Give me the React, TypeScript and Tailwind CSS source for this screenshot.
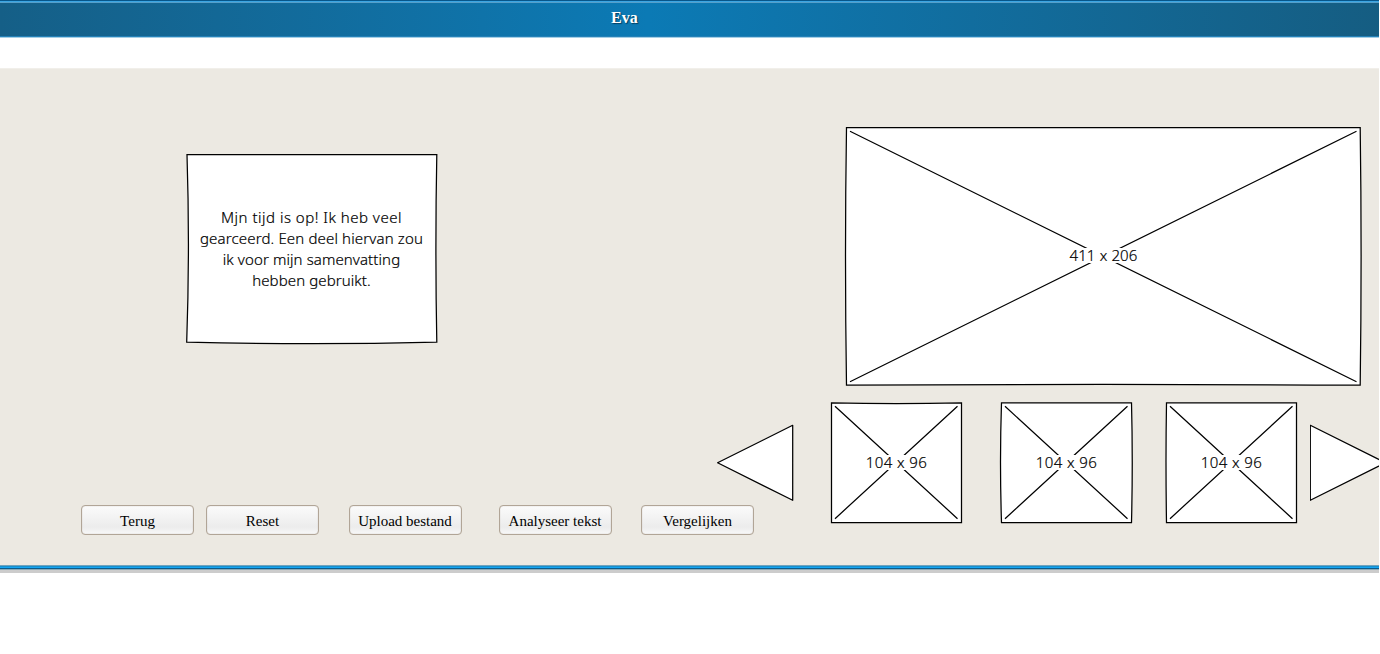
import type { ReactNode } from "react";

type ImageBoxProps = {
  width: number;
  height: number;
  outline: string;
  label: string;
  labelClass: string;
};

function ImageBox({ width, height, outline, label, labelClass }: ImageBoxProps) {
  return (
    <div className="relative grid shrink-0 place-items-center">
      <svg width={width} height={height} className="col-start-1 row-start-1 block overflow-visible" fill="none" stroke="#000" strokeWidth="1.25">
        <path d={outline} fill="#fff" />
        <path d={`M4 4.3 L${width - 4.5} ${height - 4.3} M${width - 4.5} 4.3 L4 ${height - 4.3}`} />
      </svg>
      <span className={`z-10 col-start-1 row-start-1 whitespace-nowrap bg-white font-['Noto_Sans',sans-serif] text-[15px] font-light leading-[15px] text-black [-webkit-text-stroke:0.2px_#000] ${labelClass}`}>
        {label}
      </span>
    </div>
  );
}

function Button({ children }: { children: ReactNode }) {
  return (
    <button className="h-[30px] w-[113px] shrink-0 whitespace-nowrap rounded-[4px] border border-[#b1a597] bg-linear-to-b from-[#fbfbfb] via-[#ececec] via-75% to-[#f8f8f8] pt-px text-[15px] leading-[28px] text-black shadow-[inset_0_0_1px_#b1a597]">
      {children}
    </button>
  );
}

function MessageCard() {
  return (
    <div className="grid h-[190px] w-[251px]">
      <svg width="251" height="190" className="col-start-1 row-start-1 overflow-visible" fill="#fff" stroke="#000" strokeWidth="1.25">
        <path d="M1 .5 H250.8 Q249 94 250.8 188.2 Q126 191.2 .7 188.2 Q4 94 1 .5 Z" />
      </svg>
      <p className="col-start-1 row-start-1 flex flex-col items-center pt-[53px] font-['Noto_Sans',sans-serif] text-[15px] font-light leading-[21px] text-black [-webkit-text-stroke:0.2px_#000]">
        <span className="whitespace-nowrap tracking-[0.5px]">Mjn tijd is op! Ik heb veel</span>
        <span className="whitespace-nowrap tracking-[0.15px]">gearceerd. Een deel hiervan zou</span>
        <span className="whitespace-nowrap tracking-[0.1px]">ik voor mijn samenvatting</span>
        <span className="whitespace-nowrap tracking-[0.1px]">hebben gebruikt.</span>
      </p>
    </div>
  );
}

export default function App() {
  return (
    <div className="h-[654px] w-[1379px] overflow-hidden bg-white font-['Liberation_Serif',serif]">
      <header className="flex h-[38px] flex-col">
        <div className="h-px bg-[#07568a]" />
        <div className="h-px bg-[#3ba5e2]" />
        <div className="h-px bg-[#559fca]" />
        <div className="flex h-[33px] bg-linear-to-r from-[#155f87] via-[#0b7ab5] via-47% to-[#155d82] pl-[611px]">
          <h1 className="text-[16px] font-bold leading-[30px] text-white [text-shadow:1px_1px_1px_#044062]">Eva</h1>
        </div>
        <div className="h-px bg-[#2481b8]" />
        <div className="h-px bg-[#a5cfe5]" />
      </header>
      <main className="mt-[30px] flex h-[497px] border-t border-[#f1efea] bg-[#ece9e2]">
        <section className="flex w-[754px] shrink-0 flex-col pt-[85px]">
          <div className="ml-[186px]"><MessageCard /></div>
          <div className="ml-[81px] mt-[161px] flex">
            <Button>Terug</Button>
            <div className="ml-[12px]"><Button>Reset</Button></div>
            <div className="ml-[29.5px]"><Button>Upload bestand</Button></div>
            <div className="ml-[37px]"><Button>Analyseer tekst</Button></div>
            <div className="ml-[29.5px]"><Button>Vergelijken</Button></div>
          </div>
        </section>
        <section className="-ml-[37px] flex shrink-0 flex-col pt-[58px]">
          <div className="ml-[129px] flex">
            <ImageBox width={515} height={259} outline="M.5 .5 H514.2 Q516 129 514.2 258.2 Q257 256.7 .5 258.2 Q-1.5 129 .5 .5Z" label="411 x 206" labelClass="mb-[2px] tracking-[0.15px]" />
          </div>
          <div className="mt-[16px] flex items-center">
            <svg width="77" height="77" className="shrink-0" fill="#fff" stroke="#000" strokeWidth="1.25" strokeLinejoin="round">
              <path d="M.6 38.7 L75.7 1.3 V76.3 Z" />
            </svg>
            <div className="ml-[37px]">
              <ImageBox width={131} height={121} outline="M.5 .8 Q65 2.3 130.5 .8 V120.5 H.5Z" label="104 x 96" labelClass="tracking-[0.4px]" />
            </div>
            <div className="ml-[39px]">
              <ImageBox width={131} height={121} outline="M.5 .8 H130.5 Q132 60 130.5 120.5 H.5 Q-1.5 60 .5 .8Z" label="104 x 96" labelClass="tracking-[0.4px]" />
            </div>
            <div className="ml-[34px]">
              <ImageBox width={131} height={121} outline="M.5 .8 H130.5 V120.5 H.5 Q-.5 60 .5 .8Z" label="104 x 96" labelClass="tracking-[0.4px]" />
            </div>
            <svg width="77" height="77" className="ml-[13px] shrink-0" fill="#fff" stroke="#000" strokeWidth="1.25" strokeLinejoin="round">
              <path d="M.3 1.3 L75.5 38.7 L.3 76.3 Z" />
            </svg>
          </div>
        </section>
      </main>
      <footer>
        <div className="h-px bg-[#6fa3bd]" />
        <div className="h-px bg-[#1b8fcb]" />
        <div className="h-px bg-[#12a5f5]" />
        <div className="h-px bg-[#0b5b8a]" />
        <div className="h-px bg-[#8babb9]" />
        <div className="h-[3px] bg-[#cccccc]" />
      </footer>
    </div>
  );
}
